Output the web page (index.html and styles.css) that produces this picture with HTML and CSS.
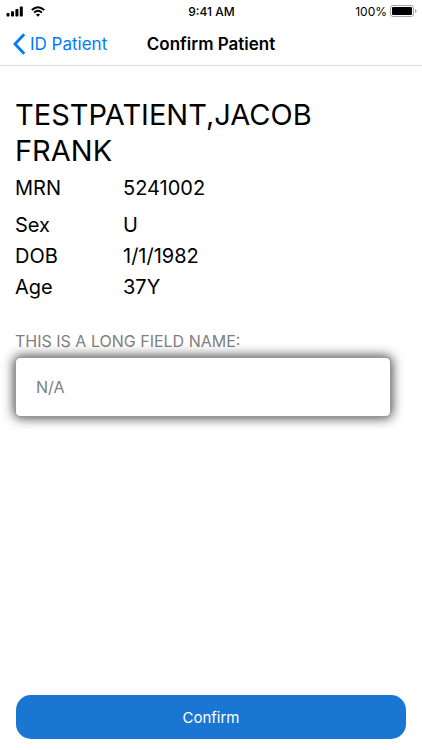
FILE: index.html
```
<!DOCTYPE html>
<html lang="en">
<head>
    <meta charset="UTF-8">
    <meta name="viewport" content="width=device-width, initial-scale=1.0">
    <title>Confirm Patient</title>
    <link rel="stylesheet" href="styles.css">
</head>
<body>
    <header>
        <div class="status-bar">
            <div class="signal">
                <svg width="17" height="11" viewBox="0 0 17 11" aria-hidden="true">
                    <rect x="0.5" y="7" width="3" height="3.5" rx="0.8"/>
                    <rect x="5" y="5.3" width="3" height="5.2" rx="0.8"/>
                    <rect x="9.4" y="3" width="3" height="7.5" rx="0.8"/>
                    <rect x="13.8" y="0.5" width="3" height="10" rx="0.8"/>
                </svg>
                <svg width="14" height="11" viewBox="0 0 14 11" aria-hidden="true">
                    <path d="M0.8 4.1 Q7 -1.7 13.2 4.1" fill="none" stroke="#000" stroke-width="2"/>
                    <path d="M3.1 6.6 Q7 3 10.9 6.6" fill="none" stroke="#000" stroke-width="1.9"/>
                    <path d="M4.9 8.6 Q7 6.7 9.1 8.6 L7 10.7 Z"/>
                </svg>
            </div>
            <span class="time">9:41 AM</span>
            <div class="battery">
                <span>100%</span>
                <svg width="27" height="12" viewBox="0 0 27 12" aria-hidden="true">
                    <rect x="0.5" y="0.5" width="23" height="11" rx="2.5" fill="#fff" stroke="#a5a5a5"/>
                    <rect x="2" y="2" width="20" height="8" rx="1"/>
                    <path d="M25 4 Q26.6 4.6 26.6 6 Q26.6 7.4 25 8 Z" fill="#a5a5a5"/>
                </svg>
            </div>
        </div>
        <nav>
            <a class="back" href="#">
                <svg width="13" height="22" viewBox="0 0 13 22" aria-hidden="true">
                    <path d="M12.2 1.2 L3 11 L12.2 20.8" fill="none" stroke="#007aff" stroke-width="2.8"/>
                </svg>
                ID Patient
            </a>
            <h1>Confirm Patient</h1>
        </nav>
    </header>
    <main>
        <h2>TESTPATIENT,JACOB FRANK</h2>
        <dl>
            <div class="row mrn"><dt>MRN</dt><dd>5241002</dd></div>
            <div class="row"><dt>Sex</dt><dd>U</dd></div>
            <div class="row"><dt>DOB</dt><dd>1/1/1982</dd></div>
            <div class="row"><dt>Age</dt><dd>37Y</dd></div>
        </dl>
        <form id="confirm-form">
            <label for="long-field">THIS IS A LONG FIELD NAME:</label>
            <input type="text" id="long-field" name="long-field" placeholder="N/A">
        </form>
    </main>
    <footer>
        <button type="submit" form="confirm-form">Confirm</button>
    </footer>
</body>
</html>
```

FILE: styles.css
```
* {
    box-sizing: border-box;
}
body {
    display: flex;
    flex-direction: column;
    min-height: 100vh;
    margin: 0;
    background-color: #fff;
    color: #000;
    font-family: Inter, "Liberation Sans", sans-serif;
}
header {
    border-bottom: 1px solid #dcdcdc;
}
.status-bar {
    display: grid;
    grid-template-columns: 1fr auto 1fr;
    align-items: center;
    height: 22px;
    padding: 0 5px 0 6px;
    font-size: 12px;
}
.signal,
.battery {
    display: flex;
    align-items: center;
}
.signal {
    gap: 8px;
}
.battery {
    justify-content: flex-end;
    gap: 3px;
}
.time {
    font-weight: 500;
}
nav {
    display: grid;
    grid-template-columns: 1fr auto 1fr;
    align-items: center;
    height: 43px;
    padding: 0 12px;
    font-size: 17px;
}
.back {
    display: flex;
    align-items: center;
    gap: 5px;
    color: #007aff;
    text-decoration: none;
    white-space: nowrap;
}
h1 {
    margin: 0;
    font-size: 17px;
    font-weight: 600;
}
main {
    flex: 1;
    padding: 31px 15px;
}
h2 {
    margin: 0 0 4px;
    font-size: 29px;
    font-weight: 400;
    line-height: 36px;
}
dl {
    margin: 0;
    font-size: 20px;
    line-height: 31px;
}
.row {
    display: flex;
}
.mrn {
    margin-bottom: 6px;
}
dt {
    width: 108px;
}
dd {
    margin: 0;
}
form {
    margin: 28px 16px 0 0;
}
label {
    display: block;
    color: #808080;
    font-size: 16px;
    line-height: 20px;
}
input {
    width: 100%;
    height: 60px;
    margin-top: 6px;
    padding: 0 20px;
    border: 1px solid #999;
    border-radius: 5px;
    box-shadow: 0 0 12px 1px rgba(0, 0, 0, 0.75);
    background-color: #fff;
    color: #808080;
    font-family: inherit;
    font-size: 16px;
}
input::placeholder {
    color: #808080;
}
footer {
    padding: 0 16px 11px;
}
button {
    display: block;
    width: 100%;
    height: 44px;
    border: none;
    border-radius: 15px;
    background-color: #1976d2;
    color: #fff;
    font-family: inherit;
    font-size: 15px;
    cursor: pointer;
}
```
